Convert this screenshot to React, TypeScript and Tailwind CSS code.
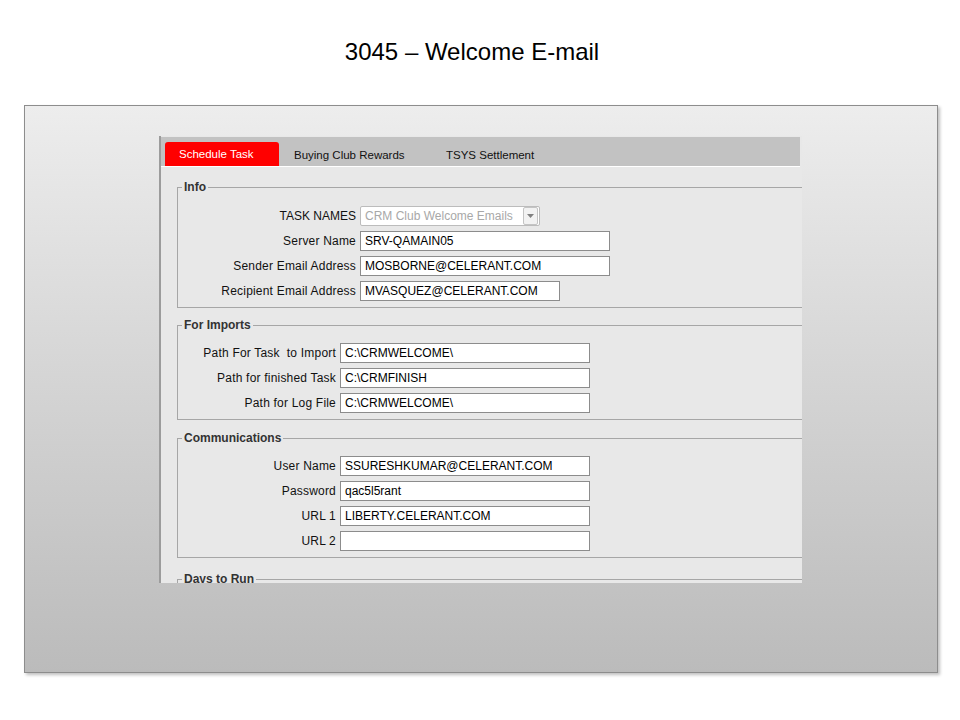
import React from 'react';

interface Field {
  label: string;
  value: string;
  width?: number;
}

const info: Field[] = [
  { label: 'Server Name', value: 'SRV-QAMAIN05' },
  { label: 'Sender Email Address', value: 'MOSBORNE@CELERANT.COM' },
  { label: 'Recipient Email Address', value: 'MVASQUEZ@CELERANT.COM', width: 200 },
];

const imports: Field[] = [
  { label: 'Path For Task  to Import', value: 'C:\\CRMWELCOME\\' },
  { label: 'Path for finished Task', value: 'C:\\CRMFINISH' },
  { label: 'Path for Log File', value: 'C:\\CRMWELCOME\\' },
];

const comms: Field[] = [
  { label: 'User Name', value: 'SSURESHKUMAR@CELERANT.COM' },
  { label: 'Password', value: 'qac5l5rant' },
  { label: 'URL 1', value: 'LIBERTY.CELERANT.COM' },
  { label: 'URL 2', value: '' },
];

function Row({ field, labelWidth }: { field: Field; labelWidth: number }) {
  return (
    <div className="flex items-center gap-[4px] h-[20px]">
      <div
        className="text-right whitespace-pre text-[12px] tracking-[0.2px] text-[#111]"
        style={{ width: labelWidth }}
      >
        {field.label}
      </div>
      <div
        className="h-[20px] border border-[#8c8c8c] bg-white pl-[4px] flex items-center text-[12px] text-black whitespace-pre"
        style={{ width: field.width ?? 250 }}
      >
        {field.value}
      </div>
    </div>
  );
}

function Group({
  title,
  className,
  children,
}: {
  title: string;
  className: string;
  children: React.ReactNode;
}) {
  return (
    <fieldset className={`ml-[16px] w-[660px] border border-[#a6a6a6] ${className}`}>
      <legend className="ml-[4px] px-[2px] text-[12px] leading-[14px] font-bold text-[#333]">{title}</legend>
      {children}
    </fieldset>
  );
}

export default function App() {
  return (
    <div
      className="w-[960px] h-[720px] bg-white flex flex-col overflow-hidden"
      style={{ fontFamily: '"Liberation Sans", Arial, sans-serif' }}
    >
      <h1 className="pt-[38px] pr-[16px] text-center text-[24px] leading-[28px] text-black">3045 – Welcome E-mail</h1>

      <div className="mt-[39px] ml-[24px] w-[914px] h-[568px] border border-[#8d8d8d] bg-gradient-to-b from-[#ededed] to-[#bbbbbb] shadow-[2px_2px_3px_rgba(0,0,0,0.25)]">
        <div className="mt-[30px] ml-[134px] w-[643px] h-[447px] overflow-hidden border-l-2 border-[#9c9c9c] bg-[#e8e8e8] pt-[1px] flex flex-col">
          {/* tabs */}
          <div className="h-[30px] bg-[#c2c2c2] border-b border-white flex items-end pl-[4px] mr-[2px] shrink-0">
            <div className="h-[24px] w-[114px] bg-[#ff0000] rounded-t-[3px] pl-[14px] pt-[1px] flex items-center text-[11.5px] text-white">
              Schedule Task
            </div>
            <div className="h-[24px] w-[152px] pl-[15px] pt-[4px] flex items-center text-[11.5px] text-[#111]">
              Buying Club Rewards
            </div>
            <div className="h-[24px] pl-[15px] pt-[4px] flex items-center text-[11.5px] text-[#111]">
              TSYS Settlement
            </div>
          </div>

          <Group title="Info" className="mt-[13px] pt-[12px] pb-[6px] shrink-0">
            <div className="flex flex-col gap-[5px]">
              <div className="flex items-center gap-[4px] h-[20px]">
                <div className="w-[178px] text-right text-[12px] text-[#111]">TASK NAMES</div>
                <div className="w-[180px] h-[20px] border border-[#bcbcbc] rounded-[2px] bg-white flex items-center">
                  <span className="flex-1 pl-[4px] text-[12px] text-[#a8a8a8] whitespace-nowrap overflow-hidden">
                    CRM Club Welcome Emails
                  </span>
                  <span className="w-[15px] h-[18px] mr-[1px] border border-[#c4c4c4] rounded-[2px] bg-[#f2f2f2] flex items-center justify-center">
                    <svg width="7" height="4" viewBox="0 0 7 4">
                      <path d="M0 0 L7 0 L3.5 4 Z" fill="#808080" />
                    </svg>
                  </span>
                </div>
              </div>
              {info.map((f) => (
                <Row key={f.label} field={f} labelWidth={178} />
              ))}
            </div>
          </Group>

          <Group title="For Imports" className="mt-[10px] pt-[11px] pb-[6px] shrink-0">
            <div className="flex flex-col gap-[5px]">
              {imports.map((f) => (
                <Row key={f.label} field={f} labelWidth={158} />
              ))}
            </div>
          </Group>

          <Group title="Communications" className="mt-[11px] pt-[11px] pb-[6px] shrink-0">
            <div className="flex flex-col gap-[5px]">
              {comms.map((f) => (
                <Row key={f.label} field={f} labelWidth={158} />
              ))}
            </div>
          </Group>

          <Group title="Days to Run" className="mt-[14px] pt-[11px] pb-[6px] shrink-0">
            <div className="h-[40px]" />
          </Group>
        </div>
      </div>
    </div>
  );
}
